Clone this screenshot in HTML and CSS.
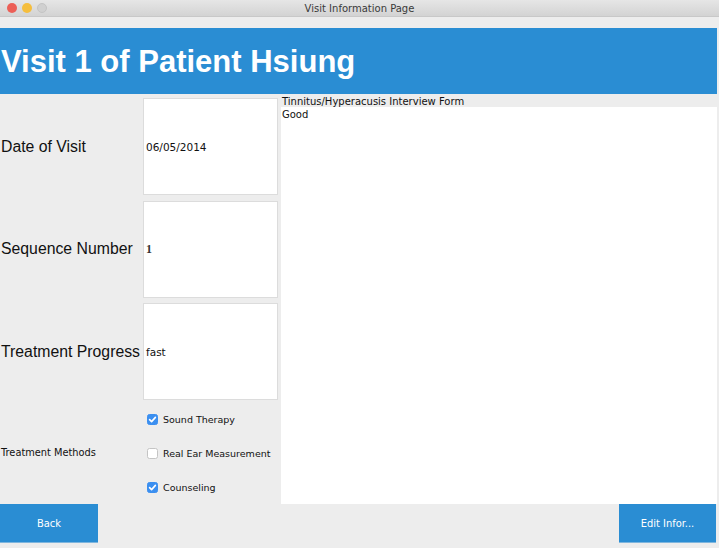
FILE: index.html
```html
<!DOCTYPE html>
<html>
<head>
<meta charset="utf-8">
<title>Visit Information Page</title>
<link rel="stylesheet" href="styles.css">
</head>
<body>
<div class="window">
  <div class="titlebar">
    <div class="lights">
      <span class="light red"></span>
      <span class="light yellow"></span>
      <span class="light gray"></span>
    </div>
    <div class="title">Visit Information Page</div>
  </div>
  <div class="toolbar"></div>
  <div class="header"><h1>Visit 1 of Patient Hsiung</h1></div>
  <div class="main">
    <div class="form">
      <div class="label big">Date of Visit</div>
      <div class="box"><span class="val sans">06/05/2014</span></div>
      <div class="label big">Sequence Number</div>
      <div class="box"><span class="val serif">1</span></div>
      <div class="label big">Treatment Progress</div>
      <div class="box"><span class="val sans">fast</span></div>
      <div class="label small">Treatment Methods</div>
      <div class="checks">
        <label class="check"><span class="cb on"><svg viewBox="0 0 11 11" width="11" height="11"><path d="M2.6 5.6 L4.6 7.6 L8.4 3.4" fill="none" stroke="#fff" stroke-width="1.6" stroke-linecap="round" stroke-linejoin="round"/></svg></span>Sound Therapy</label>
        <label class="check"><span class="cb"></span>Real Ear Measurement</label>
        <label class="check"><span class="cb on"><svg viewBox="0 0 11 11" width="11" height="11"><path d="M2.6 5.6 L4.6 7.6 L8.4 3.4" fill="none" stroke="#fff" stroke-width="1.6" stroke-linecap="round" stroke-linejoin="round"/></svg></span>Counseling</label>
      </div>
    </div>
    <div class="panel">
      <div class="panel-title">Tinnitus/Hyperacusis Interview Form</div>
      <div class="panel-body">Good</div>
    </div>
  </div>
  <div class="footer">
    <button class="btn back">Back</button>
    <button class="btn edit">Edit Infor...</button>
  </div>
</div>
</body>
</html>
```
FILE: styles.css
```css
html, body {
  margin: 0;
  padding: 0;
  background: #ededed;
}
.window {
  width: 719px;
  height: 548px;
  display: flex;
  flex-direction: column;
  background: #ededed;
  overflow: hidden;
}
.titlebar {
  height: 16px;
  flex: none;
  background: linear-gradient(#e6e6e6, #d3d3d3);
  border-bottom: 1px solid #c8c8c8;
  position: relative;
  display: flex;
  align-items: center;
  justify-content: center;
}
.lights {
  position: absolute;
  left: 7px;
  top: 3px;
  display: flex;
  gap: 5px;
}
.light {
  width: 10px;
  height: 10px;
  border-radius: 50%;
  display: block;
}
.light.red { background: #ec5f57; }
.light.yellow { background: #f5be3d; }
.light.gray { background: #d0d0d0; border: 0.5px solid #c4c4c4; box-sizing: border-box; }
.title {
  font-family: "DejaVu Sans", sans-serif;
  font-size: 10px;
  color: #3a3a3a;
}
.toolbar {
  height: 11px;
  flex: none;
  background: #ededed;
}
.header {
  height: 66px;
  flex: none;
  background: #2a8dd3;
  margin-right: 2px;
  display: flex;
  align-items: center;
}
.header h1 {
  margin: 0 0 0 1px;
  font-family: "Liberation Sans", Arial, sans-serif;
  font-weight: bold;
  font-size: 31px;
  color: #fff;
  letter-spacing: 0;
  position: relative;
  top: 1px;
}
.main {
  height: 410px;
  flex: none;
  display: flex;
}
.form {
  width: 278px;
  flex: none;
  display: grid;
  grid-template-columns: 143px 135px;
  grid-template-rows: 97px 97px 97px 102px;
  row-gap: 5.5px;
  padding-top: 4px;
  box-sizing: border-box;
}
.label {
  display: flex;
  align-items: center;
  font-family: "Liberation Sans", Arial, sans-serif;
  color: #111;
  white-space: nowrap;
  padding-left: 1px;
}
.label.big { font-size: 15.8px; }
.label.small {
  font-family: "DejaVu Sans", sans-serif;
  font-size: 9.8px;
  padding-left: 1px;
  margin-top: -5.5px;
  margin-bottom: 2px;
}
.box {
  background: #fff;
  border: 1px solid #dcdcdc;
  display: flex;
  align-items: center;
  padding-left: 2px;
}
.val { color: #111; }
.val.sans {
  font-family: "DejaVu Sans", sans-serif;
  font-size: 10.5px;
}
.val.serif {
  font-family: "Liberation Serif", serif;
  font-size: 12px;
  font-weight: bold;
  color: #333;
}
.checks {
  display: grid;
  grid-template-rows: 34px 34px 34px;
  margin-top: -3.5px;
}
.check {
  display: flex;
  align-items: center;
  font-family: "DejaVu Sans", sans-serif;
  font-size: 9.5px;
  color: #111;
  padding-left: 4px;
  white-space: nowrap;
}
.cb {
  width: 11px;
  height: 11px;
  border-radius: 2.5px;
  border: 1px solid #c4c4c4;
  background: #fff;
  box-sizing: border-box;
  margin-right: 5px;
  display: flex;
  align-items: center;
  justify-content: center;
  flex: none;
}
.cb.on {
  background: #3b8ff0;
  border-color: #3b8ff0;
}
.cb svg { display: block; flex: none; }
.panel {
  flex: 1;
  margin-left: 3px;
  margin-right: 2px;
  display: flex;
  flex-direction: column;
}
.panel-title {
  height: 12px;
  padding-top: 1px;
  flex: none;
  font-family: "DejaVu Sans", sans-serif;
  font-size: 10px;
  line-height: 13px;
  color: #111;
  padding-left: 1px;
}
.panel-body {
  flex: 1;
  background: #fff;
  font-family: "DejaVu Sans", sans-serif;
  font-size: 10px;
  line-height: 13px;
  color: #111;
  padding-left: 1px;
  padding-top: 1px;
}
.footer {
  height: 39px;
  flex: none;
  display: flex;
  justify-content: space-between;
  margin-right: 3px;
}
.btn {
  background: #2a8dd3;
  border: none;
  border-bottom: 1px solid #7fb6de;
  color: #fff;
  font-family: "DejaVu Sans", sans-serif;
  font-stretch: condensed;
  font-size: 11px;
  padding: 0;
  margin: 0;
  height: 39px;
}
.btn.back { width: 98px; }
.btn.edit { width: 97px; }
```
